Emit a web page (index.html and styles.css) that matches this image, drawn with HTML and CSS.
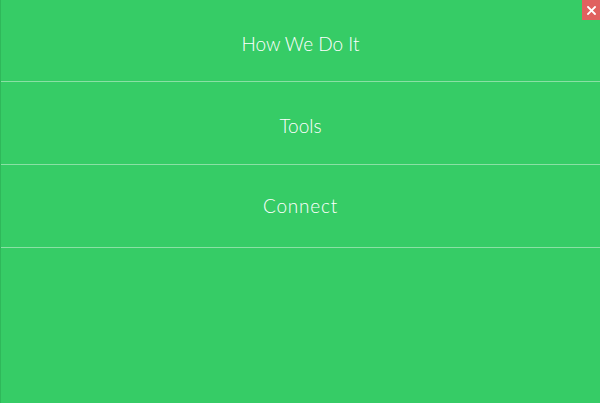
FILE: index.html
```html
<!DOCTYPE html>
<html>
<head>
<meta charset="utf-8">
<link rel="stylesheet" href="styles.css">
</head>
<body>
<nav class="menu">
  <a class="item item-1" href="#">How We Do It</a>
  <a class="item item-2" href="#">Tools</a>
  <a class="item item-3" href="#">Connect</a>
</nav>
<button class="close" aria-label="Close">
  <svg width="9" height="9" viewBox="0 0 9 9"><path d="M1 1L8 8M8 1L1 8" stroke="#fff" stroke-width="1.8" stroke-linecap="square"/></svg>
</button>
</body>
</html>
```
FILE: styles.css
```css
html, body {
  margin: 0;
  padding: 0;
  height: 100%;
}
body {
  background: #36cc66;
  font-family: "Lato", "Open Sans", sans-serif;
  font-weight: 300;
  position: relative;
  overflow: hidden;
  border-left: 1px solid #2fb85a;
  box-sizing: border-box;
}
.menu {
  display: flex;
  flex-direction: column;
}
.item {
  display: flex;
  align-items: center;
  justify-content: center;
  border-bottom: 1px solid #8ae0a4;
  color: #ffffff;
  text-decoration: none;
  font-size: 19px;
  box-sizing: content-box;
}
.item-1 { padding-top: 5px; height: 76px; }
.item-2 { padding-top: 5px; height: 77px; }
.item-3 { padding-top: 0; height: 80px; padding-bottom: 2px; letter-spacing: 0.8px; }
.close {
  position: absolute;
  top: 0;
  right: 0;
  width: 18px;
  height: 20px;
  border: none;
  padding: 0;
  background: #e0615f;
  display: flex;
  align-items: center;
  justify-content: center;
  cursor: pointer;
}
```
